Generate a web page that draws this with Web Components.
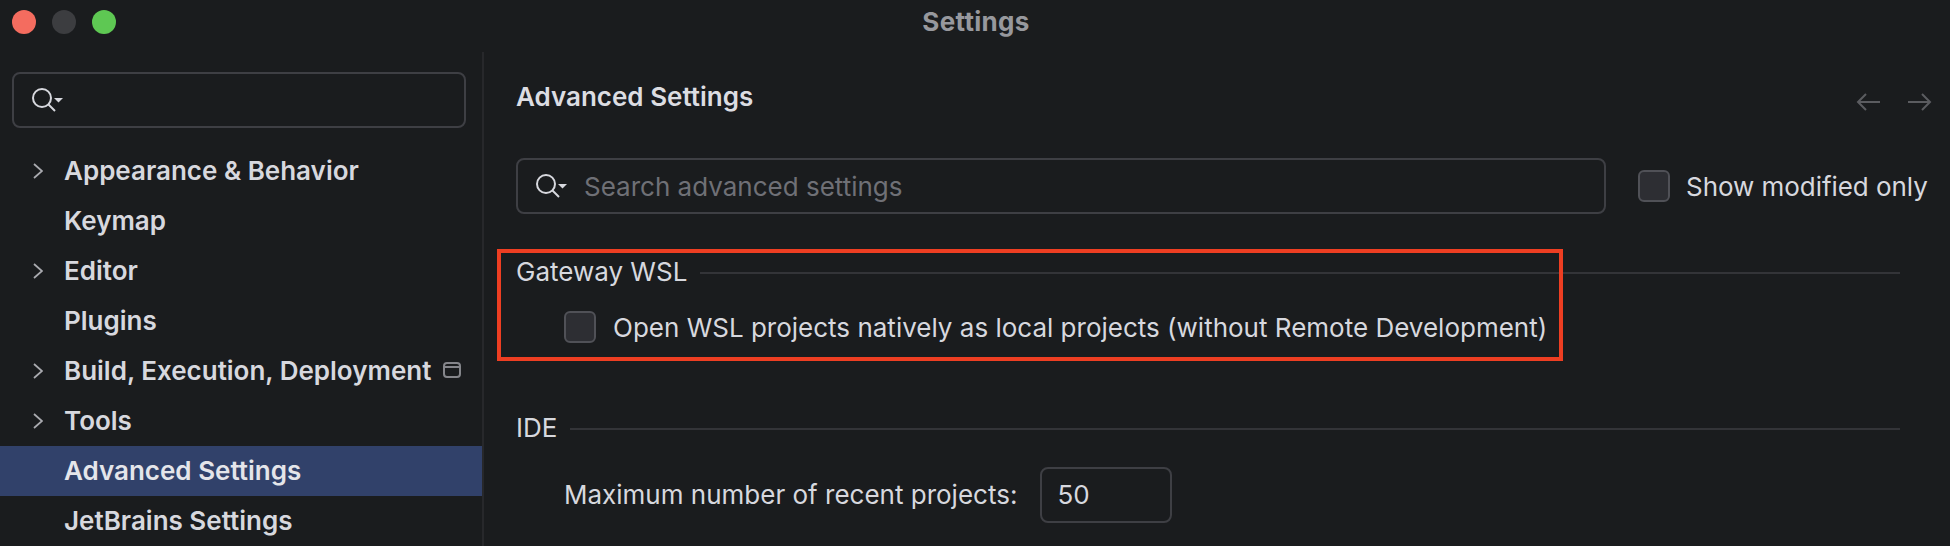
<!DOCTYPE html>
<html>
<head>
<meta charset="utf-8">
<title>Settings</title>
<style>
  html, body { margin: 0; height: 100%; background: #1a1c1e; overflow: hidden; }
  body { font-family: Inter, "Liberation Sans", sans-serif; color: #d7d8de; }
</style>
</head>
<body>

<settings-window>
  <nav-item slot="nav" arrow>Appearance &amp; Behavior</nav-item>
  <nav-item slot="nav">Keymap</nav-item>
  <nav-item slot="nav" arrow>Editor</nav-item>
  <nav-item slot="nav">Plugins</nav-item>
  <nav-item slot="nav" arrow badge>Build, Execution, Deployment</nav-item>
  <nav-item slot="nav" arrow>Tools</nav-item>
  <nav-item slot="nav" selected>Advanced Settings</nav-item>
  <nav-item slot="nav">JetBrains Settings</nav-item>

  <settings-group title="Gateway WSL" highlight>
    <check-box>Open WSL projects natively as local projects (without Remote Development)</check-box>
  </settings-group>
  <settings-group title="IDE">
    <number-row label="Maximum number of recent projects:" value="50"></number-row>
  </settings-group>
</settings-window>

<script>
// magnifier with the small dropdown caret, same in both search boxes
const searchIcon = `
  <svg width="32" height="28" viewBox="0 0 32 28" fill="none">
    <circle cx="10" cy="12" r="9" stroke="#d7d8de" stroke-width="2"/>
    <path d="M16.5 18.5 L23 25" stroke="#d7d8de" stroke-width="2"/>
    <path d="M22 12 h9 l-4.5 4.5 z" fill="#d7d8de"/>
  </svg>`;

class SearchField extends HTMLElement {
  constructor() {
    super();
    this.attachShadow({ mode: "open" });
    const text = this.getAttribute("placeholder") || "";
    this.shadowRoot.innerHTML = `
    <style>
      :host { display: flex; align-items: center; box-sizing: border-box; height: 56px;
              border: 2px solid #3e3f44; border-radius: 8px; padding-left: 18px; }
      svg { display: block; flex: none; }
      span { margin-left: 16px; font-size: 26px; color: #6f7076; }
    </style>
    ${searchIcon}<span>${text}</span>`;
  }
}
customElements.define("search-field", SearchField);

class NavItem extends HTMLElement {
  constructor() {
    super();
    this.attachShadow({ mode: "open" });
    const arrow = this.hasAttribute("arrow")
      ? `<svg class="arrow" width="10" height="16" viewBox="0 0 10 16" fill="none"><path d="M1 1 L9 8 L1 15" stroke="#a9aaaf" stroke-width="1.8"/></svg>`
      : "";
    const badge = this.hasAttribute("badge")
      ? `<svg class="badge" width="18" height="16" viewBox="0 0 18 16" fill="none"><rect x="1" y="1" width="16" height="14" rx="3" stroke="#85868b" stroke-width="2"/><path d="M1 5 H17" stroke="#85868b" stroke-width="2"/></svg>`
      : "";
    this.shadowRoot.innerHTML = `
    <style>
      :host { display: flex; align-items: center; position: relative; box-sizing: border-box; height: 50px;
              padding: 0 0 2px 64px; font-size: 26px; font-weight: 600; color: #d7d8de; }
      :host([selected]) { background: #31416a; color: #e4e5ea; }
      .arrow { position: absolute; left: 33px; top: 17px; }
      .badge { margin-left: 12px; }
    </style>
    ${arrow}<slot></slot>${badge}`;
  }
}
customElements.define("nav-item", NavItem);

class CheckBox extends HTMLElement {
  constructor() {
    super();
    this.attachShadow({ mode: "open" });
    this.shadowRoot.innerHTML = `
    <style>
      :host { display: flex; align-items: center; font-size: 26px; color: #d7d8de; white-space: nowrap; }
      i { flex: none; box-sizing: border-box; width: 32px; height: 32px; margin-right: var(--gap, 17px);
          background: #2d2e33; border: 2px solid #505157; border-radius: 6px; }
    </style>
    <i></i><slot></slot>`;
  }
}
customElements.define("check-box", CheckBox);

class NumberRow extends HTMLElement {
  constructor() {
    super();
    this.attachShadow({ mode: "open" });
    this.shadowRoot.innerHTML = `
    <style>
      :host { display: flex; align-items: center; gap: 23px; font-size: 26px; color: #d7d8de; }
      span { padding-bottom: 2px; }
      .input { box-sizing: border-box; width: 132px; height: 56px; padding: 0 0 2px 15px;
               display: flex; align-items: center;
               border: 2px solid #3e3f44; border-radius: 8px; }
    </style>
    <span>${this.getAttribute("label")}</span>
    <div class="input">${this.getAttribute("value")}</div>`;
  }
}
customElements.define("number-row", NumberRow);

class SettingsGroup extends HTMLElement {
  constructor() {
    super();
    this.attachShadow({ mode: "open" });
    const mark = this.hasAttribute("highlight") ? `<div class="mark"></div>` : "";
    this.shadowRoot.innerHTML = `
    <style>
      :host { display: block; position: relative; }
      .head { display: flex; align-items: center; gap: 13px; height: 36px; font-size: 26px; color: #d7d8de; }
      .head hr { flex: 1; height: 2px; margin: 3px 0 0; border: 0; background: #333438; }
      .body { padding-left: 48px; margin-top: 22px; }
      /* red annotation drawn over the screenshot */
      .mark { position: absolute; left: -19px; top: -4px; width: 1058px; height: 104px;
              border: 4px solid #ee3e22; }
    </style>
    <div class="head"><span>${this.getAttribute("title")}</span><hr></div>
    <div class="body"><slot></slot></div>
    ${mark}`;
  }
}
customElements.define("settings-group", SettingsGroup);

class SettingsWindow extends HTMLElement {
  constructor() {
    super();
    this.attachShadow({ mode: "open" });
    this.shadowRoot.innerHTML = `
    <style>
      :host { display: block; height: 546px; overflow: hidden; background: #1a1c1e; }
      .titlebar { display: flex; align-items: center; justify-content: center; position: relative; height: 42px;
                  padding-left: 2px; font-size: 26px; font-weight: 700; letter-spacing: 0.3px; color: #97989d; }
      .lights { position: absolute; left: 12px; top: 10px; display: flex; gap: 16px; }
      .lights i { width: 24px; height: 24px; border-radius: 50%; }
      .columns { display: flex; height: 504px; }
      .side { width: 482px; flex: none; box-sizing: content-box; border-right: 2px solid #27282b; margin-top: 10px; }
      .side search-field { margin: 20px 16px 18px 12px; }
      .main { flex: 1; padding: 0 18px 0 32px; min-width: 0; }
      h1 { margin: 0; padding-top: 39px; height: 40px; line-height: 32px; font-size: 26px; font-weight: 600; color: #dcdde2; position: relative; }
      .nav-arrows { position: absolute; right: 0; top: 50px; display: flex; gap: 28px; }
      .nav-arrows svg { display: block; }
      .tools { display: flex; align-items: center; margin-top: 37px; }
      .tools search-field { width: 1090px; flex: none; }
      .tools check-box { margin-left: 32px; --gap: 16px; letter-spacing: -0.05px; }
      .groups { margin-top: 39px; margin-right: 32px; display: flex; flex-direction: column; }
      .groups ::slotted(settings-group) { margin-bottom: 66px; }
    </style>
    <div class="titlebar">
      <div class="lights"><i style="background:#f46c5f"></i><i style="background:#3c3d40"></i><i style="background:#5ec853"></i></div>
      Settings
    </div>
    <div class="columns">
      <div class="side">
        <search-field></search-field>
        <slot name="nav"></slot>
      </div>
      <div class="main">
        <h1>Advanced Settings
          <div class="nav-arrows">
            <svg width="24" height="20" viewBox="0 0 24 20" fill="none" stroke="#5b5c60" stroke-width="2"><path d="M24 10 H2 M10 2 L2 10 L10 18"/></svg>
            <svg width="24" height="20" viewBox="0 0 24 20" fill="none" stroke="#5b5c60" stroke-width="2"><path d="M0 10 H22 M14 2 L22 10 L14 18"/></svg>
          </div>
        </h1>
        <div class="tools">
          <search-field placeholder="Search advanced settings"></search-field>
          <check-box>Show modified only</check-box>
        </div>
        <div class="groups"><slot></slot></div>
      </div>
    </div>`;
  }
}
customElements.define("settings-window", SettingsWindow);
</script>
</body>
</html>
